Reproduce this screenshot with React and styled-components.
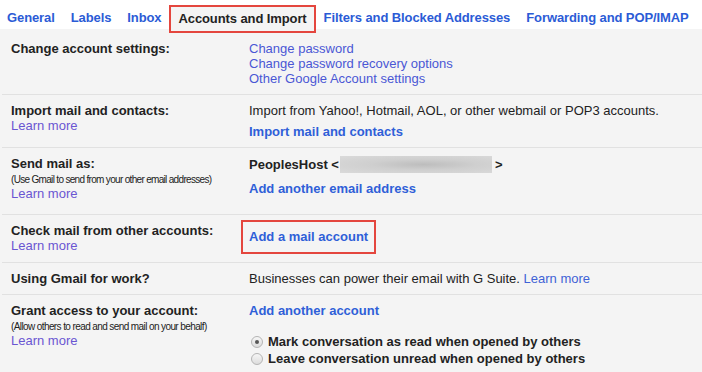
import React from "react";
import styled, { createGlobalStyle } from "styled-components";

const GlobalStyle = createGlobalStyle`
  html, body {
    margin: 0;
    padding: 0;
    background: #ffffff;
    font-family: "Liberation Sans", Arial, sans-serif;
    font-size: 13px;
    color: #222;
  }
`;

const tabs = [
  "General",
  "Labels",
  "Inbox",
  "Accounts and Import",
  "Filters and Blocked Addresses",
  "Forwarding and POP/IMAP",
];

export default function App() {
  return (
    <>
      <GlobalStyle />
      <Page>
        <TabBar>
          {tabs.map((t) => (
            <Tab key={t} $active={t === "Accounts and Import"}>
              {t}
            </Tab>
          ))}
        </TabBar>

        <Panel>
          <Row $pt={12}>
            <Label>
              <Title>Change account settings:</Title>
            </Label>
            <Value>
              <Link>Change password</Link>
              <Link>Change password recovery options</Link>
              <Link>Other Google Account settings</Link>
            </Value>
          </Row>

          <Row>
            <Label>
              <Title>Import mail and contacts:</Title>
              <Learn>Learn more</Learn>
            </Label>
            <Value>
              <Plain>Import from Yahoo!, Hotmail, AOL, or other webmail or POP3 accounts.</Plain>
              <Action $mt={6}>Import mail and contacts</Action>
            </Value>
          </Row>

          <Row $pb={13}>
            <Label>
              <Title>Send mail as:</Title>
              <Hint $spacing={-0.68}>(Use Gmail to send from your other email addresses)</Hint>
              <Learn>Learn more</Learn>
            </Label>
            <Value>
              <Sender>
                PeoplesHost &lt;<Blurred />&gt;
              </Sender>
              <Action $mt={8}>Add another email address</Action>
            </Value>
          </Row>

          <Row>
            <Label>
              <Title>Check mail from other accounts:</Title>
              <Learn>Learn more</Learn>
            </Label>
            <Value>
              <Highlight>
                <Action>Add a mail account</Action>
              </Highlight>
            </Value>
          </Row>

          <Row>
            <Label>
              <Title>Using Gmail for work?</Title>
            </Label>
            <Value>
              <Plain>
                Businesses can power their email with G Suite. <InlineLink>Learn more</InlineLink>
              </Plain>
            </Value>
          </Row>

          <Row>
            <Label>
              <Title>Grant access to your account:</Title>
              <Hint $spacing={-0.6}>(Allow others to read and send mail on your behalf)</Hint>
              <Learn>Learn more</Learn>
            </Label>
            <Value>
              <Action>Add another account</Action>
              <Radios>
                <RadioRow>
                  <Radio $checked />
                  Mark conversation as read when opened by others
                </RadioRow>
                <RadioRow>
                  <Radio />
                  Leave conversation unread when opened by others
                </RadioRow>
              </Radios>
            </Value>
          </Row>
        </Panel>
      </Page>
    </>
  );
}

const Page = styled.div`
  width: 702px;
  height: 372px;
  overflow: hidden;
  display: flex;
  flex-direction: column;
`;

const TabBar = styled.div`
  display: flex;
  align-items: flex-start;
  height: 29px;
  box-sizing: border-box;
  padding: 6px 0 0 0;
  background: #fff;
  white-space: nowrap;
`;

const Tab = styled.div`
  position: relative;
  z-index: 1;
  height: 24px;
  line-height: 24px;
  padding: 0 8px;
  font-weight: bold;
  font-size: 13px;
  letter-spacing: -0.1px;
  color: ${(p) => (p.$active ? "#222" : "#2b5bd6")};
  &:first-child {
    padding-left: 7px;
  }
  ${(p) =>
    p.$active &&
    `
    margin-top: -1px;
    padding: 0 7px;
    border: 2px solid #e4463e;
    background: #f4f4f4;
  `}
`;

const Panel = styled.div`
  flex: 1;
  background: #f4f4f4;
  padding-left: 2px;
`;

const Row = styled.div`
  display: grid;
  grid-template-columns: 238px 1fr;
  padding: ${(p) => p.$pt ?? 8}px 0 ${(p) => p.$pb ?? 8}px 9px;
  line-height: 15px;

  & + & {
    border-top: 1px solid #e1e1e1;
  }
`;

const Label = styled.div`
  display: flex;
  flex-direction: column;
  align-items: flex-start;
`;

const Title = styled.div`
  font-weight: bold;
  color: #222;
`;

const Hint = styled.div`
  margin-top: 2px;
  font-size: 10px;
  line-height: 13px;
  letter-spacing: ${(p) => p.$spacing}px;
  color: #222;
  white-space: nowrap;
`;

const Learn = styled.span`
  color: #6a56d2;
`;

const Value = styled.div`
  display: flex;
  flex-direction: column;
  align-items: flex-start;
`;

const Link = styled.span`
  color: #4a57d5;
`;

const Plain = styled.div`
  color: #222;
  white-space: nowrap;
`;

const InlineLink = styled.span`
  color: #3f62d6;
`;

const Action = styled.span`
  margin-top: ${(p) => p.$mt ?? 0}px;
  font-weight: bold;
  color: #2f5fd8;
`;

const Sender = styled.div`
  font-weight: bold;
  color: #222;
  display: flex;
  align-items: center;
  white-space: pre;
`;

const Blurred = styled.span`
  display: inline-block;
  width: 152px;
  height: 17px;
  margin: 0 3px 0 1px;
  background: radial-gradient(ellipse at 55% 50%, #bdbdbd 0%, #cfcfcf 45%, #dadada 100%);
`;

const Highlight = styled.div`
  margin: -3px 0 0 -8px;
  padding: 7px 6px 8px 6px;
  border: 2px solid #e4463e;
  display: flex;
`;

const Radios = styled.div`
  margin-top: 15px;
  display: flex;
  flex-direction: column;
`;

const RadioRow = styled.div`
  display: flex;
  align-items: center;
  gap: 5px;
  line-height: 17px;
  font-weight: bold;
  color: #222;
  white-space: nowrap;
`;

const Radio = styled.span`
  position: relative;
  width: 12px;
  height: 12px;
  margin-left: 2px;
  box-sizing: border-box;
  border-radius: 50%;
  border: 1px solid #b4b4b4;
  background: linear-gradient(#f6f6f6, #dcdcdc);

  &::after {
    content: "";
    display: ${(p) => (p.$checked ? "block" : "none")};
    position: absolute;
    left: 3px;
    top: 3px;
    width: 4px;
    height: 4px;
    border-radius: 50%;
    background: #555;
  }
`;
